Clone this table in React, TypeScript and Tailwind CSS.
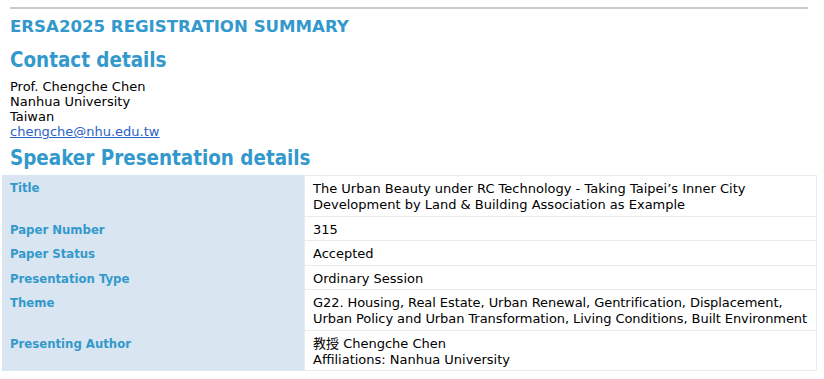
import React from "react";

const rows: { label: string; value: React.ReactNode; tight?: boolean }[] = [
  {
    label: "Title",
    value: (
      <>
        The Urban Beauty under RC Technology - Taking Taipei’s Inner City
        <br />
        Development by Land &amp; Building Association as Example
      </>
    ),
  },
  { label: "Paper Number", value: "315" },
  { label: "Paper Status", value: "Accepted" },
  { label: "Presentation Type", value: "Ordinary Session" },
  {
    label: "Theme",
    tight: true,
    value: (
      <>
        G22. Housing, Real Estate, Urban Renewal, Gentrification, Displacement,
        <br />
        Urban Policy and Urban Transformation, Living Conditions, Built Environment
      </>
    ),
  },
  {
    label: "Presenting Author",
    value: (
      <>
        教授 Chengche Chen
        <br />
        Affiliations: Nanhua University
      </>
    ),
  },
];

const cond = { fontFamily: '"DejaVu Sans Condensed", "DejaVu Sans", sans-serif', fontStretch: "condensed" as const };

export default function App() {
  return (
    <div
      className="w-[824px] h-[379px] bg-white text-[13px] leading-[15px] text-black overflow-hidden"
      style={{ fontFamily: '"DejaVu Sans", Verdana, "Noto Sans CJK SC", sans-serif' }}
    >
      <div className="pt-[7px] pl-[10px] pr-[16px]">
        <div className="h-[2px] bg-[#cccccc]" />
        <h1 className="mt-[8px] text-[16.6px] leading-[20px] font-bold text-[#3399cc]">
          ERSA2025 REGISTRATION SUMMARY
        </h1>
        <h2 className="mt-[12px] text-[20.4px] leading-[22px] font-bold text-[#3399cc]" style={cond}>
          Contact details
        </h2>
        <div className="mt-[8px]">
          <div>Prof. Chengche Chen</div>
          <div>Nanhua University</div>
          <div>Taiwan</div>
          <div>
            <a href="#" className="text-[#2a62c4] underline">
              chengche@nhu.edu.tw
            </a>
          </div>
        </div>
        <h2 className="mt-[8px] text-[20.4px] leading-[22px] font-bold text-[#3399cc]" style={cond}>
          Speaker Presentation details
        </h2>
      </div>
      <div className="mt-[6px] ml-[2px] w-[815px] grid grid-cols-[302px_513px]">
        {rows.map((r, i) => (
          <React.Fragment key={i}>
            <div
              className="bg-[#d9e5f0] px-[8px] pt-[5px] pb-[3px] font-bold text-[#3399cc] leading-[16px]"
              style={cond}
            >
              {r.label}
            </div>
            <div
              className={
                "whitespace-nowrap border-l border-r border-[#e5edf3] px-[8px] pt-[5px] pb-[2.5px] leading-[16px] " +
                (i === 0 ? "border-t " : "") +
                (r.tight ? "tracking-[-0.07px] " : "") +
                "border-b"
              }
            >
              {r.value}
            </div>
          </React.Fragment>
        ))}
      </div>
    </div>
  );
}
